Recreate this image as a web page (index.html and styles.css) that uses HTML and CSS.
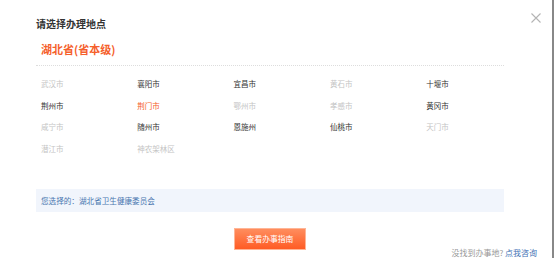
FILE: index.html
```html
<!DOCTYPE html>
<html lang="zh-CN">
<head>
    <meta charset="UTF-8">
    <meta name="viewport" content="width=device-width, initial-scale=1.0">
    <title>请选择办理地点</title>
    <link rel="stylesheet" href="styles.css">
</head>
<body>

<div class="dialog">
    <span class="close">
        <svg width="10" height="10" viewBox="0 0 10 10">
            <path d="M0.5 0.5 L9.5 9.5 M9.5 0.5 L0.5 9.5" stroke="#b4b4b4" stroke-width="1.1" fill="none"/>
        </svg>
    </span>

    <h1 class="title">请选择办理地点</h1>
    <div class="province">湖北省(省本级)</div>

    <ul class="city-list">
        <li class="off">武汉市</li>
        <li>襄阳市</li>
        <li>宜昌市</li>
        <li class="off">黄石市</li>
        <li>十堰市</li>
        <li>荆州市</li>
        <li class="active">荆门市</li>
        <li class="off">鄂州市</li>
        <li class="off">孝感市</li>
        <li>黄冈市</li>
        <li class="off">咸宁市</li>
        <li>随州市</li>
        <li>恩施州</li>
        <li>仙桃市</li>
        <li class="off">天门市</li>
        <li class="off">潜江市</li>
        <li class="off">神农架林区</li>
    </ul>

    <div class="selected">您选择的：湖北省卫生健康委员会</div>

    <div class="footer">
        <button class="guide-btn">查看办事指南</button>
        <p class="help">没找到办事地? <a href="#">点我咨询</a></p>
    </div>
</div>

</body>
</html>
```

FILE: styles.css
```css
body {
    margin: 0;
    font-family: "Noto Sans CJK SC", "Noto Sans", sans-serif;
    background-color: white;
}

.dialog {
    position: relative;
    box-sizing: border-box;
    width: 554px;
    height: 258px;
    padding: 17px 48px 0 36px;
    border-right: 2px solid #888;
}

.close {
    position: absolute;
    top: 13px;
    left: 531px;
    display: block;
    width: 10px;
    height: 10px;
}

.close svg {
    display: block;
}

.title {
    margin: 0;
    font-size: 10px;
    line-height: 14px;
    font-weight: bold;
    color: #333;
}

.province {
    margin-top: 11px;
    padding-left: 5px;
    font-size: 11px;
    line-height: 14px;
    font-weight: bold;
    color: #f5602c;
    padding-bottom: 9px;
    border-bottom: 1px dotted #ddd;
}

.city-list {
    display: grid;
    grid-template-columns: repeat(5, 96.3px);
    grid-auto-rows: 21.7px;
    margin: 0;
    padding: 7px 0 0 5px;
    list-style: none;
}

.city-list li {
    font-size: 7.5px;
    line-height: 21.7px;
    color: #333;
    cursor: pointer;
}

.city-list li.off {
    color: #c4c4c4;
}

.city-list li.active {
    color: #f5602c;
}

.selected {
    margin-top: 29px;
    padding-left: 5px;
    height: 23px;
    line-height: 23px;
    font-size: 7.6px;
    color: #4a77b0;
    background-color: #f1f5fc;
}

.footer {
    display: grid;
    grid-template-columns: 198px 72px 1fr;
    width: 501px;
    margin-top: 16px;
}

.guide-btn {
    grid-column: 2;
    height: 22px;
    padding: 0;
    border: 1px solid #ffb596;
    background: linear-gradient(#ff8d5e, #ff5b24);
    color: white;
    font-family: inherit;
    font-size: 7.8px;
    cursor: pointer;
}

.help {
    grid-column: 3;
    justify-self: end;
    align-self: end;
    margin: 0 0 -8px 0;
    font-size: 8px;
    line-height: 10px;
    color: #999;
}

.help a {
    color: #3f72b5;
    text-decoration: none;
}
```
